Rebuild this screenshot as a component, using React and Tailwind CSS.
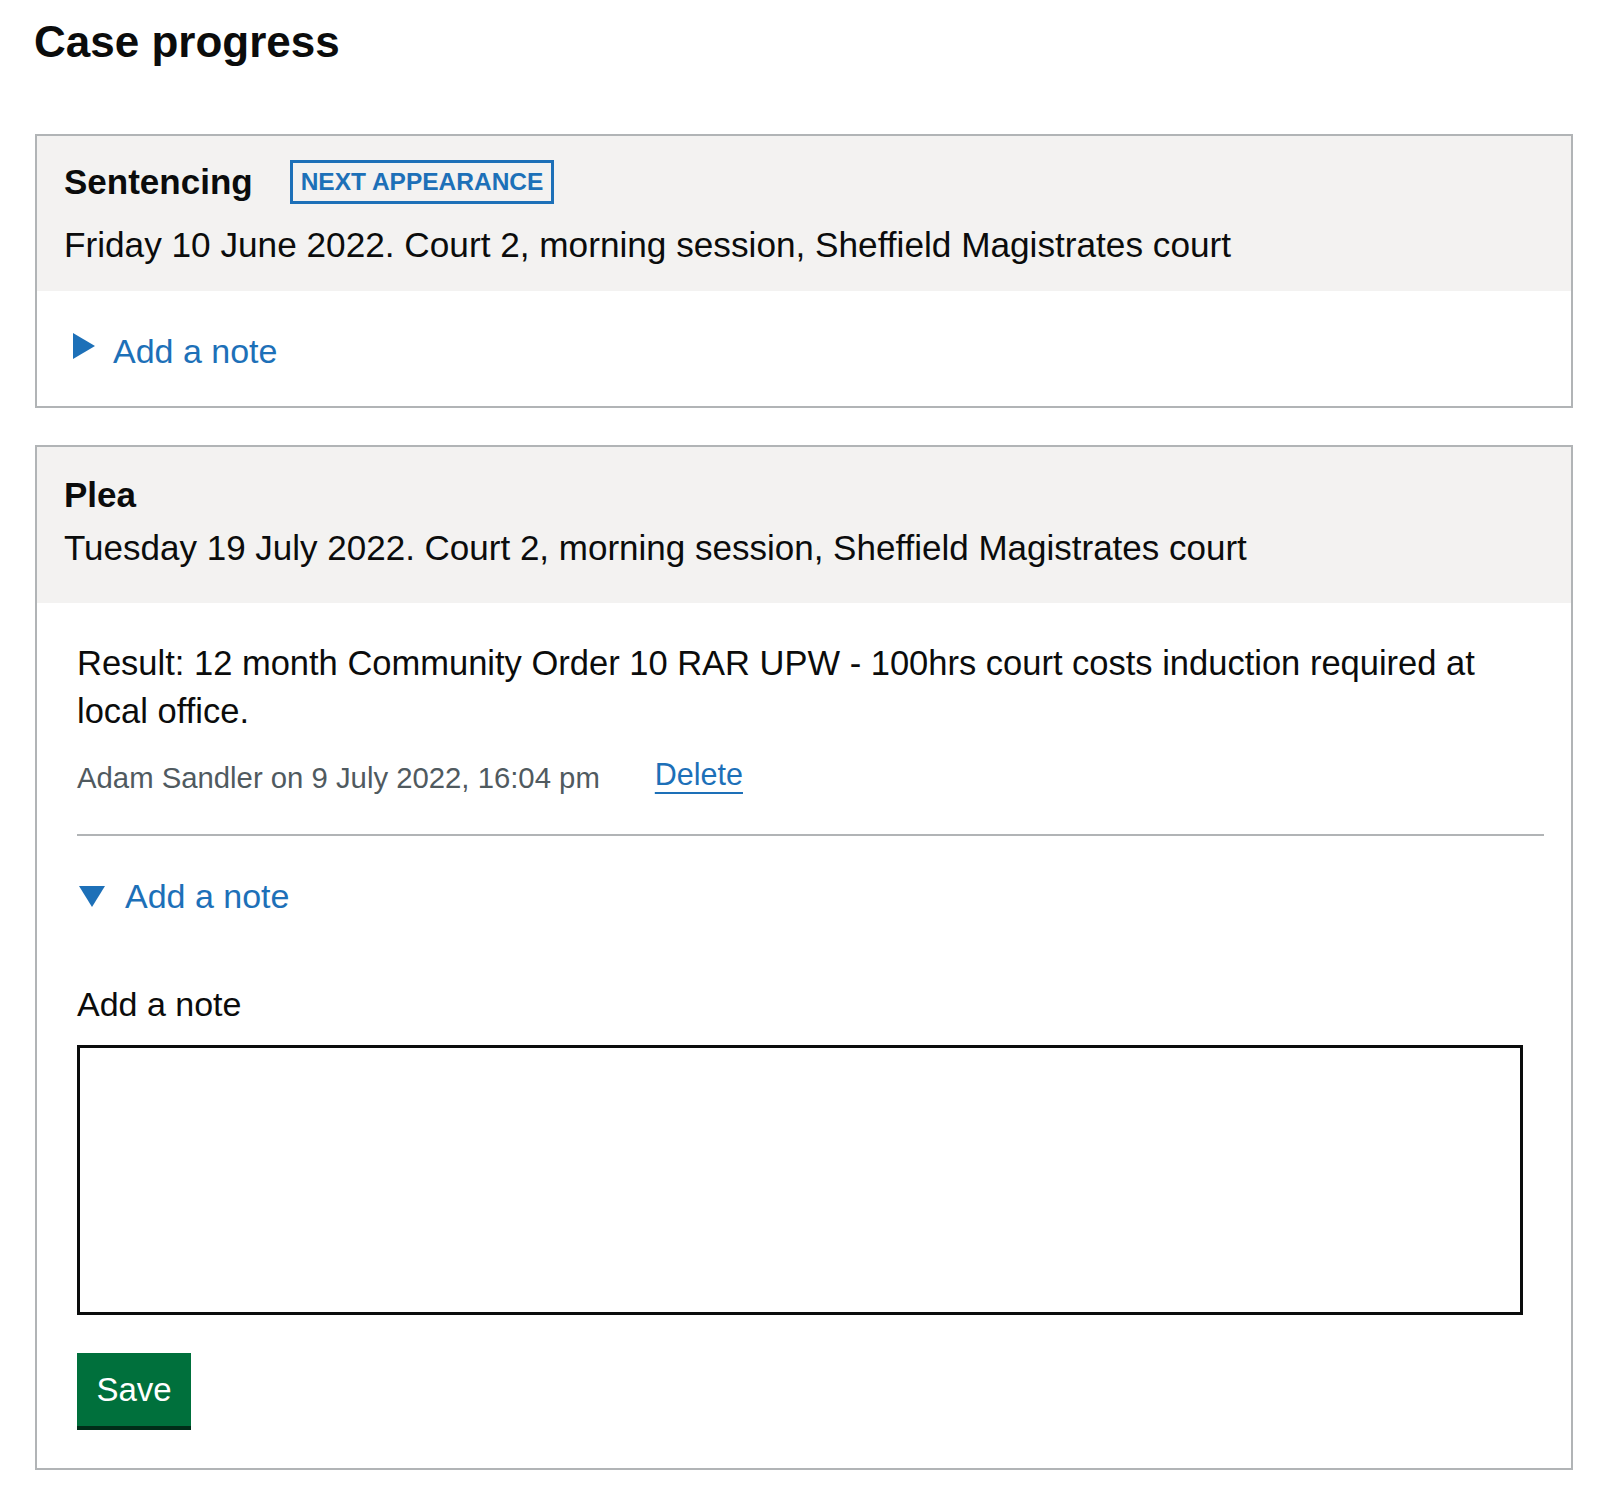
import { useState } from "react";

function TriangleRight() {
  return (
    <svg width="22" height="26" viewBox="0 0 22 26" className="mt-[2px] shrink-0">
      <polygon points="0,0 22,13 0,26" fill="#1d70b8" />
    </svg>
  );
}

function TriangleDown() {
  return (
    <svg width="26" height="21" viewBox="0 0 26 21" className="mt-[10px] ml-[2px] shrink-0">
      <polygon points="0,0 26,0 13,21" fill="#1d70b8" />
    </svg>
  );
}

export default function App() {
  const [note, setNote] = useState("");

  return (
    <div
      className="min-h-screen bg-white text-[#0b0c0c] pb-[20px]"
      style={{ fontFamily: '"Liberation Sans", Arial, sans-serif' }}
    >
      {/* Heading */}
      <div className="pt-[17px] pl-[34px]">
        <h1 className="text-[44px] leading-[50px] font-bold">Case progress</h1>
      </div>

      {/* Sentencing */}
      <div className="mt-[67px] ml-[35px] w-[1538px] border-2 border-[#b1b4b6]">
        <div className="bg-[#f3f2f1] pt-[24px] pb-[23px] pl-[27px]">
          <div className="flex items-center h-[44px]">
            <h2 className="text-[35px] leading-[44px] font-bold">Sentencing</h2>
            <span className="ml-[37px] h-[44px] border-[3px] border-[#1d70b8] px-[8px] text-[24.5px] leading-[38px] font-bold text-[#1d70b8]">
              NEXT APPEARANCE
            </span>
          </div>
          <p className="mt-[18px] text-[35.2px] leading-[46px]">
            Friday 10 June 2022. Court 2, morning session, Sheffield Magistrates court
          </p>
        </div>
        <div className="pt-[40px] pb-[35px] pl-[36px]">
          <button className="flex items-start gap-[18px] text-[#1d70b8]">
            <TriangleRight />
            <span className="text-[34px] leading-[40px]">Add a note</span>
          </button>
        </div>
      </div>

      {/* Plea */}
      <div className="mt-[37px] ml-[35px] w-[1538px] border-2 border-[#b1b4b6]">
        <div className="bg-[#f3f2f1] pt-[26px] pb-[32px] pl-[27px]">
          <h2 className="text-[35px] leading-[44px] font-bold">Plea</h2>
          <p className="mt-[8px] text-[35px] leading-[46px]">
            Tuesday 19 July 2022. Court 2, morning session, Sheffield Magistrates court
          </p>
        </div>
        <div className="pt-[36px] pb-[42px] pl-[40px] pr-[27px]">
          <p className="text-[34.5px] leading-[48px]">
            Result: 12 month Community Order 10 RAR UPW - 100hrs court costs induction required at local office.
          </p>
          <div className="mt-[21px] flex items-start">
            <span className="mt-[4px] text-[29.3px] leading-[36px] text-[#505a5f]">
              Adam Sandler on 9 July 2022, 16:04 pm
            </span>
            <a
              href="#"
              className="ml-[55px] text-[30.5px] leading-[36px] text-[#1d70b8] underline decoration-2 underline-offset-[7px]"
            >
              Delete
            </a>
          </div>
          <div className="mt-[38px] h-[2px] bg-[#b1b4b6]" />

          <button className="mt-[40px] flex items-start gap-[20px] text-[#1d70b8]">
            <TriangleDown />
            <span className="text-[34px] leading-[40px]">Add a note</span>
          </button>

          <div className="mt-[68px]">
            <label htmlFor="note" className="block text-[34px] leading-[40px]">
              Add a note
            </label>
            <textarea
              id="note"
              value={note}
              onChange={(e) => setNote(e.target.value)}
              className="mt-[21px] block w-[1446px] h-[270px] border-[3px] border-[#0b0c0c] resize-none outline-none"
            />
          </div>

          <button className="mt-[38px] block w-[114px] h-[73px] bg-[#00703c] text-white text-[33px] leading-[73px] text-center shadow-[0_4px_0_#002d18]">
            Save
          </button>
        </div>
      </div>
    </div>
  );
}
